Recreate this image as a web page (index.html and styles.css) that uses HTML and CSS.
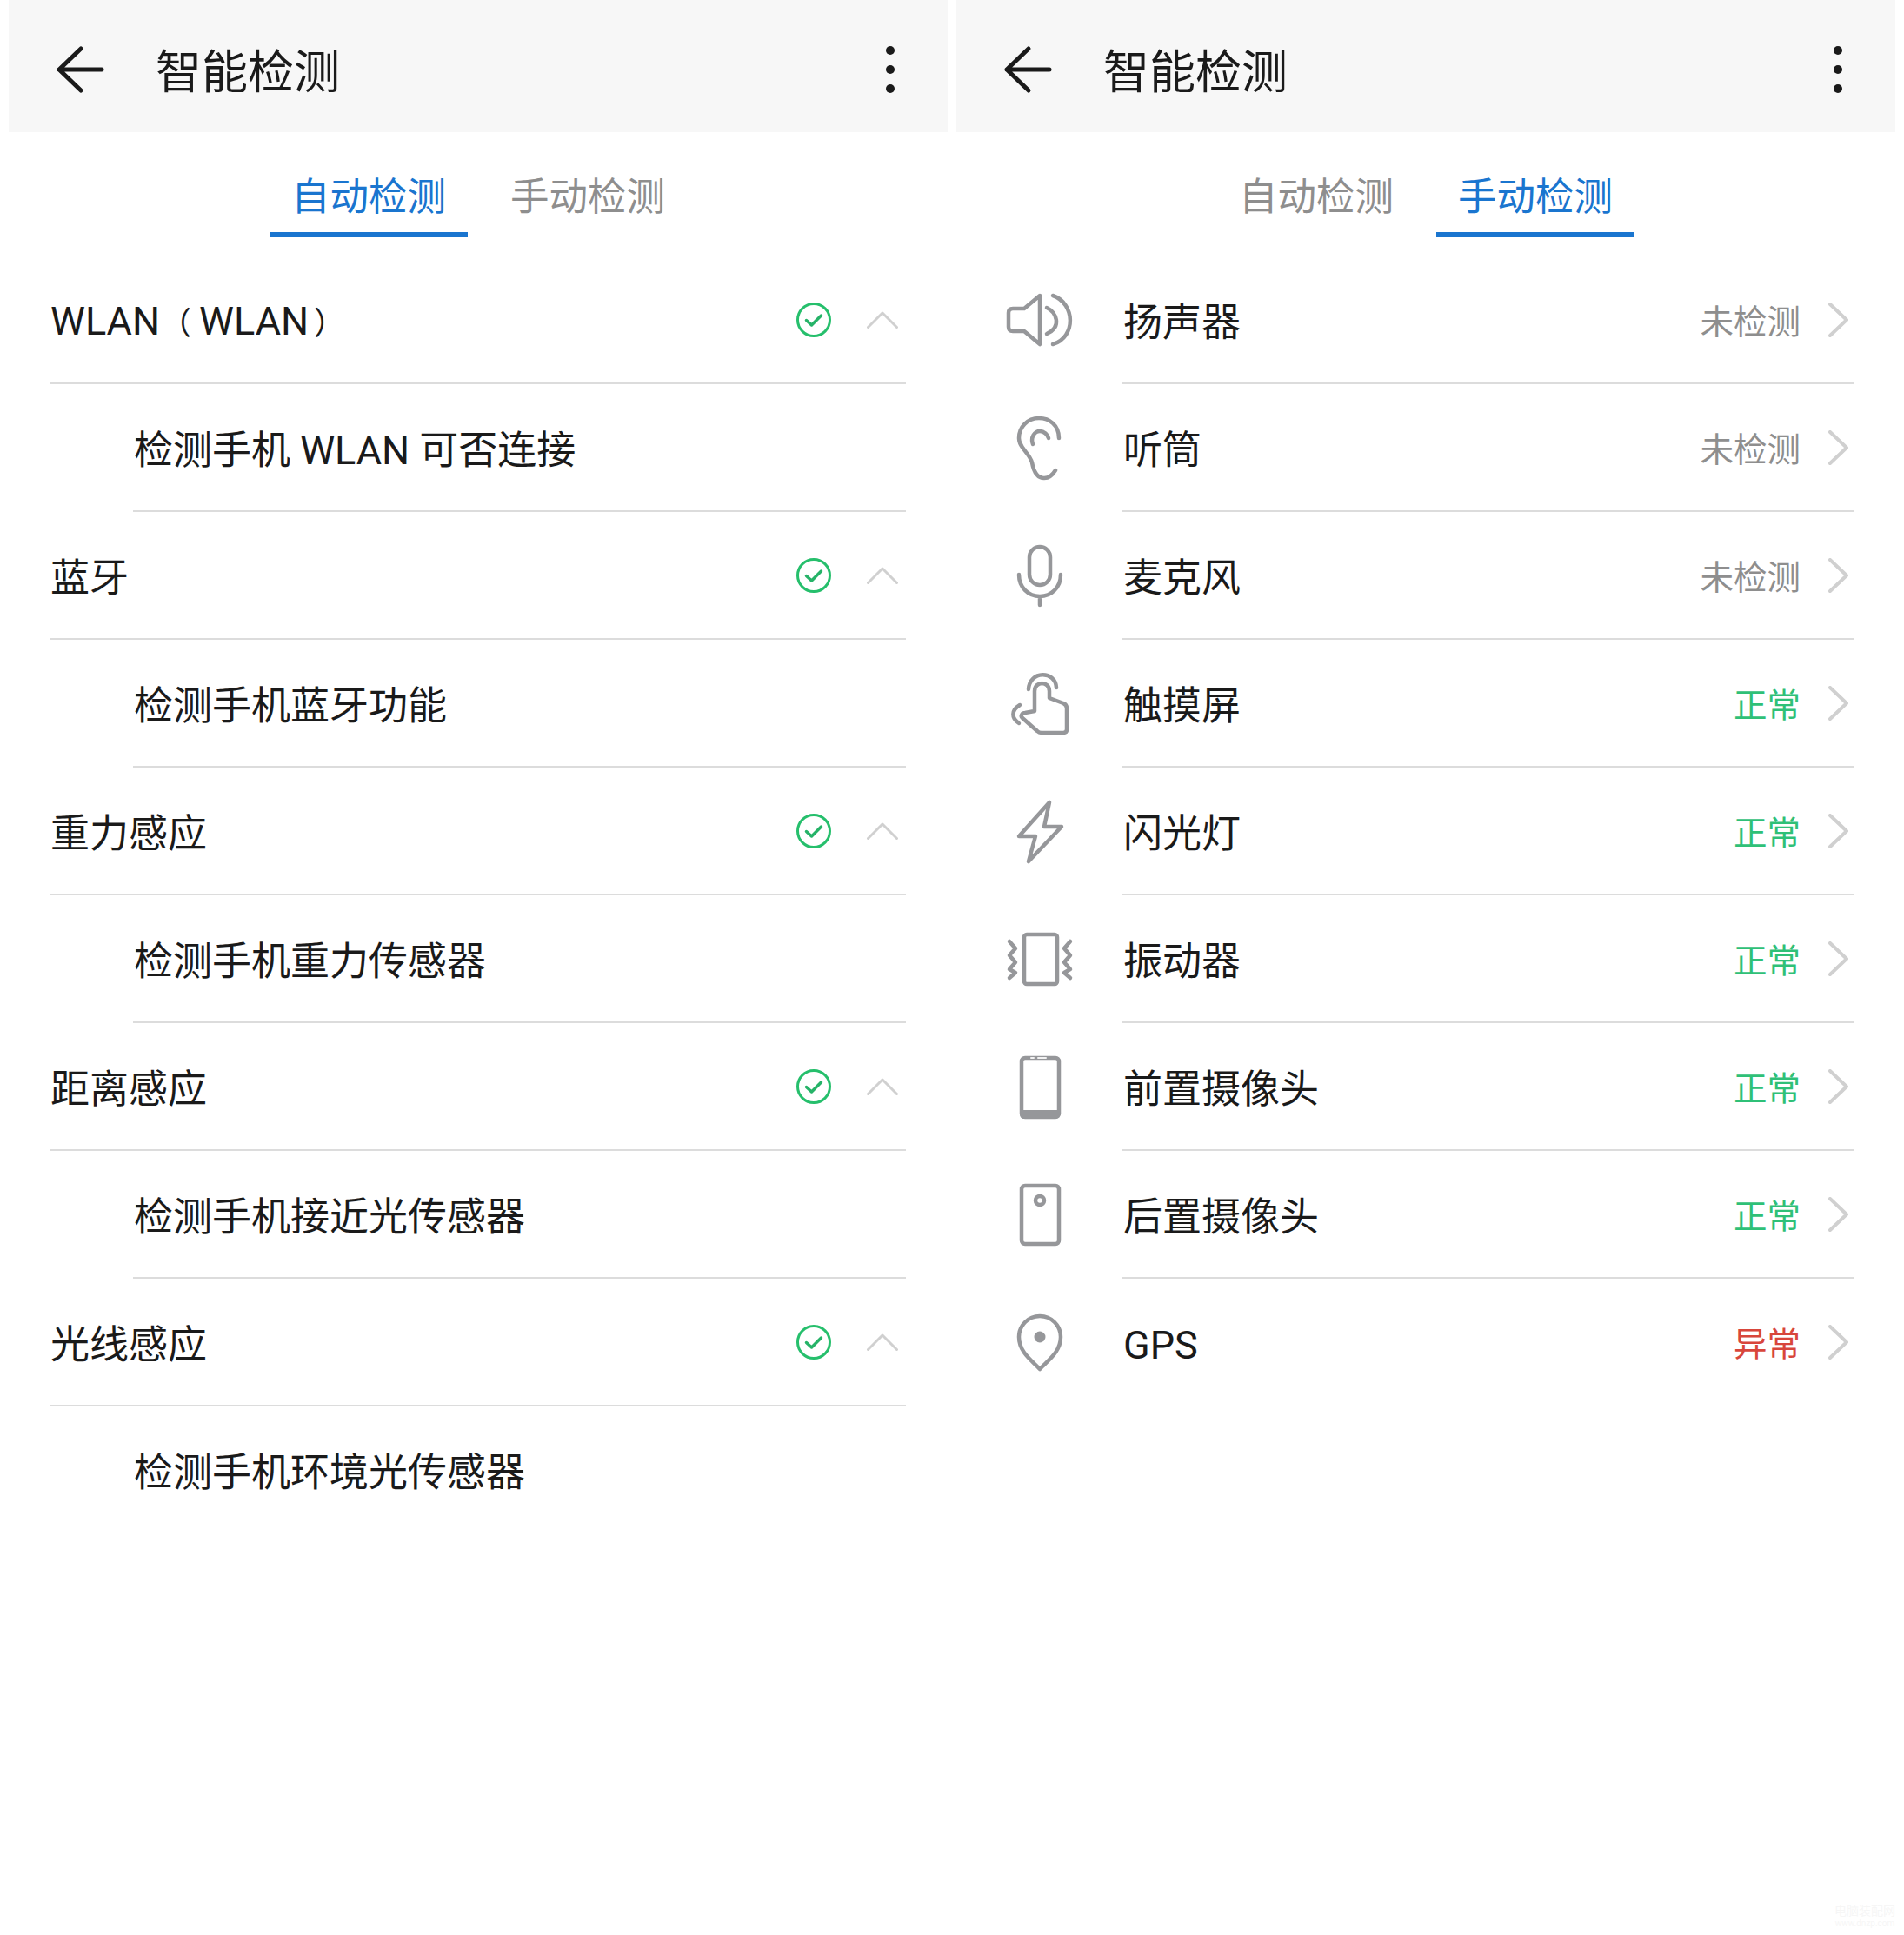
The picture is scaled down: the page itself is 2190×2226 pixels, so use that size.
FILE: index.html
```html
<!DOCTYPE html>
<html lang="zh-CN">
<head>
<meta charset="utf-8">
<title>智能检测</title>
<link rel="stylesheet" href="styles.css">
</head>
<body>
<main class="page">
  <section class="panel">
    <header class="bar">
      <svg class="back" viewBox="0 0 64 64"><path d="M8 32H57M33 8L8 32L33 56"/></svg>
      <h1 class="title">智能检测</h1>
      <div class="more"><i></i><i></i><i></i></div>
    </header>
    <nav class="tabs">
      <div class="tab active">自动检测</div>
      <div class="tab">手动检测</div>
    </nav>
    <div class="list">
      <div class="row auto"><span class="label">WLAN<span class="pl">（</span>WLAN<span class="pr">）</span></span><svg class="check" viewBox="0 0 40 40"><circle cx="20" cy="20" r="18.5"/><path d="M11.500 20.500L17.500 26L28.500 15"/></svg><svg class="up" viewBox="0 0 36 20"><path d="M1.500 18.500L18 2L34.500 18.500"/></svg></div>
      <div class="row sub"><span class="label">检测手机 WLAN 可否连接</span></div>
      <div class="row auto"><span class="label">蓝牙</span><svg class="check" viewBox="0 0 40 40"><circle cx="20" cy="20" r="18.5"/><path d="M11.500 20.500L17.500 26L28.500 15"/></svg><svg class="up" viewBox="0 0 36 20"><path d="M1.500 18.500L18 2L34.500 18.500"/></svg></div>
      <div class="row sub"><span class="label">检测手机蓝牙功能</span></div>
      <div class="row auto"><span class="label">重力感应</span><svg class="check" viewBox="0 0 40 40"><circle cx="20" cy="20" r="18.5"/><path d="M11.500 20.500L17.500 26L28.500 15"/></svg><svg class="up" viewBox="0 0 36 20"><path d="M1.500 18.500L18 2L34.500 18.500"/></svg></div>
      <div class="row sub"><span class="label">检测手机重力传感器</span></div>
      <div class="row auto"><span class="label">距离感应</span><svg class="check" viewBox="0 0 40 40"><circle cx="20" cy="20" r="18.5"/><path d="M11.500 20.500L17.500 26L28.500 15"/></svg><svg class="up" viewBox="0 0 36 20"><path d="M1.500 18.500L18 2L34.500 18.500"/></svg></div>
      <div class="row sub"><span class="label">检测手机接近光传感器</span></div>
      <div class="row auto"><span class="label">光线感应</span><svg class="check" viewBox="0 0 40 40"><circle cx="20" cy="20" r="18.5"/><path d="M11.500 20.500L17.500 26L28.500 15"/></svg><svg class="up" viewBox="0 0 36 20"><path d="M1.500 18.500L18 2L34.500 18.500"/></svg></div>
      <div class="row sub last"><span class="label">检测手机环境光传感器</span></div>
    </div>
  </section>

  <section class="panel">
    <header class="bar">
      <svg class="back" viewBox="0 0 64 64"><path d="M8 32H57M33 8L8 32L33 56"/></svg>
      <h1 class="title">智能检测</h1>
      <div class="more"><i></i><i></i><i></i></div>
    </header>
    <nav class="tabs">
      <div class="tab">自动检测</div>
      <div class="tab active">手动检测</div>
    </nav>
    <div class="list">
      <div class="mrow">
        <svg class="ico" viewBox="-48 -48 96 96"><path d="M0 -28L-18 -13H-31Q-36 -13 -36 -8V8Q-36 13 -31 13H-18L0 28Z"/><path d="M8 -14C19 -9 26 8 8 16M15 -28C41 -19 42 20 15 28"/></svg>
        <div class="mbody"><span class="label">扬声器</span><span class="status">未检测</span><svg class="next" viewBox="0 0 24 40"><path d="M2 2L21 20L2 38"/></svg></div>
      </div>
      <div class="mrow">
        <svg class="ico" viewBox="-48 -48 96 96"><path d="M22 -11C22 -26 11 -34 -1 -34C-14 -34 -24 -24 -24 -11C-24 0 -12 6 -9 17C-7 28 -3 35 5 35C10 35 15 31 18 26"/><path d="M-8 -4C-11 -12 -6 -19 0 -19C5 -19 9 -15 10 -11"/></svg>
        <div class="mbody"><span class="label">听筒</span><span class="status">未检测</span><svg class="next" viewBox="0 0 24 40"><path d="M2 2L21 20L2 38"/></svg></div>
      </div>
      <div class="mrow">
        <svg class="ico" viewBox="-48 -48 96 96"><rect x="-12" y="-33" width="24" height="44" rx="12"/><path d="M-24 -1C-24 14 -13 24 0 24C13 24 24 14 24 -1M0 24V34"/></svg>
        <div class="mbody"><span class="label">麦克风</span><span class="status">未检测</span><svg class="next" viewBox="0 0 24 40"><path d="M2 2L21 20L2 38"/></svg></div>
      </div>
      <div class="mrow">
        <svg class="ico" viewBox="-48 -48 96 96"><path d="M-13 -16C-12 -38 18 -38 19 -18"/><path d="M-6 9V-14C-6 -26 11 -26 11 -14V-6L27 0C30 1 31 3 31 6V30C31 33 29 34 27 34H2C0 34 -2 33 -3 32L-20 17C-23 14 -20 11 -17 11Z"/><path d="M-23 2C-33 8 -33 17 -24 23"/></svg>
        <div class="mbody"><span class="label">触摸屏</span><span class="status ok">正常</span><svg class="next" viewBox="0 0 24 40"><path d="M2 2L21 20L2 38"/></svg></div>
      </div>
      <div class="mrow">
        <svg class="ico" viewBox="-48 -48 96 96"><path d="M11 -33L5 -5H25L-13 35L-5 6H-24Z"/></svg>
        <div class="mbody"><span class="label">闪光灯</span><span class="status ok">正常</span><svg class="next" viewBox="0 0 24 40"><path d="M2 2L21 20L2 38"/></svg></div>
      </div>
      <div class="mrow">
        <svg class="ico" viewBox="-48 -48 96 96"><rect x="-18" y="-28" width="38" height="57" rx="3"/><path d="M-35 -20L-28 -12L-35 -4L-28 4L-35 12L-28 16L-35 22M35 -20L28 -12L35 -4L28 4L35 12L28 16L35 22"/></svg>
        <div class="mbody"><span class="label">振动器</span><span class="status ok">正常</span><svg class="next" viewBox="0 0 24 40"><path d="M2 2L21 20L2 38"/></svg></div>
      </div>
      <div class="mrow">
        <svg class="ico" viewBox="-48 -48 96 96"><rect x="-21" y="-33" width="43" height="68" rx="4"/><path class="solid" d="M-21 27H22V31Q22 37 18 37H-18Q-23 37 -23 31V27Z"/><path class="slot" d="M-10 -33H-7M-2 -33H7"/></svg>
        <div class="mbody"><span class="label">前置摄像头</span><span class="status ok">正常</span><svg class="next" viewBox="0 0 24 40"><path d="M2 2L21 20L2 38"/></svg></div>
      </div>
      <div class="mrow">
        <svg class="ico" viewBox="-48 -48 96 96"><rect x="-21" y="-33" width="43" height="67" rx="4"/><circle cx="0" cy="-16" r="5"/></svg>
        <div class="mbody"><span class="label">后置摄像头</span><span class="status ok">正常</span><svg class="next" viewBox="0 0 24 40"><path d="M2 2L21 20L2 38"/></svg></div>
      </div>
      <div class="mrow last">
        <svg class="ico" viewBox="-48 -48 96 96"><path d="M0 31C-8 22 -24 12 -24 -6A24 24 0 0 1 24 -6C24 12 8 22 0 31Z"/><circle class="solid" cx="0" cy="-6" r="6.500"/></svg>
        <div class="mbody"><span class="label">GPS</span><span class="status bad">异常</span><svg class="next" viewBox="0 0 24 40"><path d="M2 2L21 20L2 38"/></svg></div>
      </div>
    </div>
  </section>
</main>
<div class="mark"><div>电脑装配网</div><div class="mark-url">www.dnzp.com</div></div>
</body>
</html>
```
FILE: styles.css
```css
* { box-sizing: border-box; }
html, body { margin: 0; padding: 0; background: #fff; }
body {
  width: 2190px;
  height: 2226px;
  position: relative;
  overflow: hidden;
  font-family: Roboto, "Noto Sans CJK SC", sans-serif;
  color: #1a1a1a;
}
.page { display: flex; gap: 10px; padding: 0 10px; }
.panel { width: 1080px; flex: none; }

.bar {
  height: 152px;
  background: #f7f7f7;
  display: flex;
  align-items: center;
  padding: 8px 61px 0 50px;
}
.back { width: 64px; height: 64px; flex: none; }
.back path { fill: none; stroke: #1a1a1a; stroke-width: 5; stroke-linecap: round; stroke-linejoin: round; }
.title { margin: 0 0 0 55px; padding-top: 8px; font-size: 53px; line-height: 64px; font-weight: 400; }
.more { margin-left: auto; display: flex; flex-direction: column; gap: 12px; }
.more i { display: block; width: 10px; height: 10px; border-radius: 50%; background: #1a1a1a; }

.tabs { display: flex; justify-content: center; gap: 24px; padding-top: 51px; margin-bottom: 22px; }
.tab {
  width: 228px;
  height: 70px;
  padding-bottom: 16px;
  border-bottom: 6px solid transparent;
  font-size: 44.5px;
  line-height: 48px;
  text-align: center;
  color: #8e8e8e;
}
.tab.active { color: #1a75cf; border-bottom-color: #1a75cf; }

.list { display: flex; flex-direction: column; }
.row {
  height: 147px;
  margin: 0 48px 0 47px;
  display: flex;
  align-items: center;
  border-bottom: 2px solid #dcdcdc;
}
.row.sub { margin-left: 143px; }
.row.last, .mrow.last .mbody { border-bottom-color: transparent; }
.label { margin-left: 1px; padding-top: 8px; font-size: 45px; line-height: 60px; white-space: nowrap; }
.pl { margin-right: 9px; font-size: 36px; }
.pr { margin-left: 6px; font-size: 36px; }
.check { width: 40px; height: 40px; flex: none; margin-left: auto; }
.check circle { fill: none; stroke: #26bf6c; stroke-width: 3; }
.check path { fill: none; stroke: #26b368; stroke-width: 3.5; stroke-linecap: round; stroke-linejoin: round; }
.up { width: 36px; height: 20px; flex: none; margin: 0 9px 0 41px; }
.up path { fill: none; stroke: #d0d0d0; stroke-width: 3; stroke-linecap: round; stroke-linejoin: round; }

.mrow { height: 147px; display: flex; }
.ico { width: 96px; height: 96px; flex: none; margin: 25px 47px 0 48px; }
.ico path, .ico rect, .ico circle { fill: none; stroke: #96979a; stroke-width: 4.5; stroke-linecap: round; stroke-linejoin: round; }
.ico .solid { fill: #96979a; stroke: none; }
.ico .slot { stroke: #f2f2f2; stroke-width: 2; }
.mbody {
  flex: 1;
  margin-right: 48px;
  display: flex;
  align-items: center;
  border-bottom: 2px solid #dcdcdc;
}
.status { margin-left: auto; padding-top: 6px; font-size: 38.5px; line-height: 50px; color: #8e8e8e; }
.status.ok { color: #2fc077; }
.status.bad { color: #d8463b; }
.next { width: 24px; height: 40px; flex: none; margin: 0 5px 0 32px; }
.next path { fill: none; stroke: #d0d0d0; stroke-width: 4; stroke-linecap: round; stroke-linejoin: round; }

.mark {
  position: absolute;
  left: 2110px;
  top: 2190px;
  width: 70px;
  color: #f6f6f6;
  font-size: 14px;
  line-height: 16px;
  text-align: center;
  white-space: nowrap;
}
.mark-url { font-size: 10px; line-height: 14px; }
```
